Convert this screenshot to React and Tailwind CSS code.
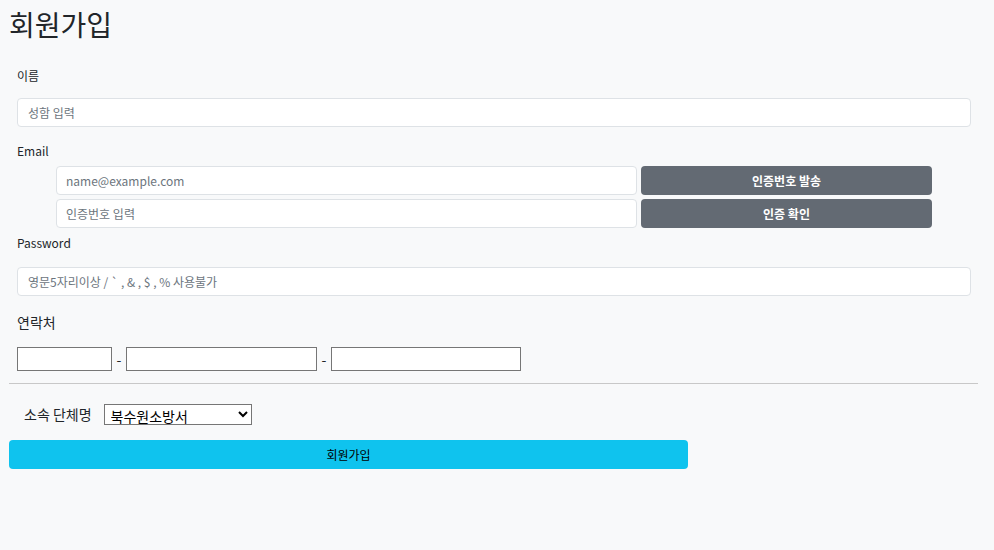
import React from "react";

export default function App() {
  const font = { fontFamily: '"Noto Sans CJK KR", "Noto Sans", sans-serif' };
  return (
    <div className="w-[994px] h-[550px] bg-[#f8f9fa] text-[#212529] overflow-hidden" style={font}>
      <div className="px-[9px] pt-[4px]">
        <h1 className="text-[28px] leading-[40px] m-0 font-normal">회원가입</h1>
        <div className="pl-[8px] pr-[14px]">
          <div className="text-[12px] leading-[18px] mt-[23px]">이름</div>
          <input
            className="mt-[13px] w-full h-[29px] rounded-[4px] border border-[#dee2e6] bg-white px-[10px] text-[12px] placeholder:text-[#6c757d] outline-none"
            placeholder="성함 입력"
          />
          <div className="text-[12px] leading-[18px] mt-[15px]">Email</div>
          <div className="flex flex-col gap-[4px] mt-[6px] pl-[39px] pr-[39px]">
            <div className="flex gap-[4px]">
              <input
                className="w-[581px] h-[29px] rounded-[4px] border border-[#dee2e6] bg-white px-[9px] text-[12px] placeholder:text-[#6c757d] outline-none"
                placeholder="name@example.com"
              />
              <button className="flex-1 h-[29px] rounded-[4px] bg-[#636a73] text-white text-[12px] font-bold">인증번호 발송</button>
            </div>
            <div className="flex gap-[4px]">
              <input
                className="w-[581px] h-[29px] rounded-[4px] border border-[#dee2e6] bg-white px-[9px] text-[12px] placeholder:text-[#6c757d] outline-none"
                placeholder="인증번호 입력"
              />
              <button className="flex-1 h-[29px] rounded-[4px] bg-[#636a73] text-white text-[12px] font-bold">인증 확인</button>
            </div>
          </div>
          <div className="text-[12px] leading-[18px] mt-[6px]">Password</div>
          <input
            className="mt-[15px] w-full h-[29px] rounded-[4px] border border-[#dee2e6] bg-white px-[10px] text-[12px] placeholder:text-[#6c757d] outline-none"
            placeholder="영문5자리이상 / ` , & , $ , % 사용불가"
          />
          <div className="text-[14px] leading-[20px] mt-[16px]">연락처</div>
          <div className="flex items-center mt-[15px] text-[14px]">
            <input className="w-[95px] h-[24px] border border-[#767676] bg-white outline-none" />
            <span className="w-[14px] text-center">-</span>
            <input className="w-[191px] h-[24px] border border-[#767676] bg-white outline-none" />
            <span className="w-[14px] text-center">-</span>
            <input className="w-[190px] h-[24px] border border-[#767676] bg-white outline-none" />
          </div>
        </div>
        <div className="w-[969px] h-px bg-[#c8c8c8] mt-[12px]" />
        <div className="flex items-center mt-[20px] pl-[15px]">
          <span className="text-[14px] mr-[12px]">소속 단체명</span>
          <select className="w-[148px] h-[21px] py-0 pl-[2px] border border-[#767676] bg-white text-black text-[14px] leading-[17px] outline-none">
            <option>북수원소방서</option>
          </select>
        </div>
        <button className="mt-[15px] w-[679px] h-[29px] rounded-[4px] bg-[#0fc3ee] text-black text-[12px]">회원가입</button>
      </div>
    </div>
  );
}
